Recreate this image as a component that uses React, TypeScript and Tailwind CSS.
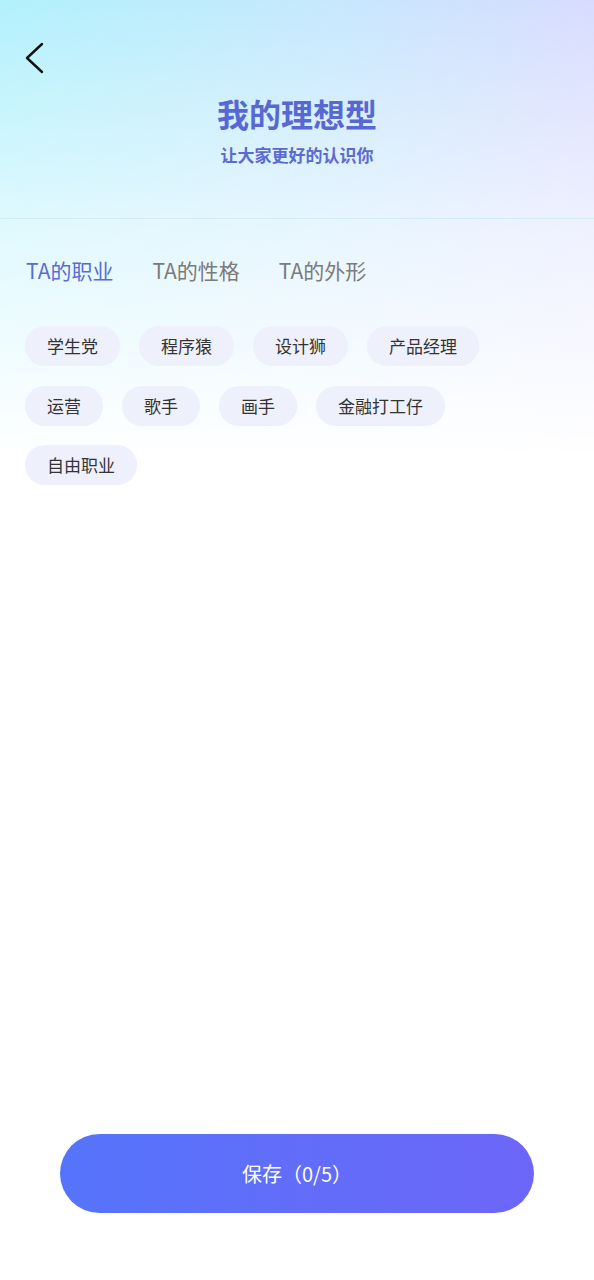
import React from 'react';

const tabs = ['TA的职业', 'TA的性格', 'TA的外形'];
const jobs = ['学生党', '程序猿', '设计狮', '产品经理', '运营', '歌手', '画手', '金融打工仔', '自由职业'];

const App: React.FC = () => {
  return (
    <div
      className="min-h-[1280px] w-full flex flex-col bg-white bg-[linear-gradient(to_bottom,rgba(255,255,255,0)_0px,rgba(255,255,255,0.6)_230px,#ffffff_460px),linear-gradient(to_right,#b2f1fc,#c6e8fd_55%,#d8dcfe)] bg-no-repeat"
      style={{ fontFamily: '"Noto Sans CJK SC", "Noto Sans", sans-serif' }}
    >
      {/* Header */}
      <header className="h-[219px] border-b border-[#d3ecf4] flex flex-col">
        <div className="mt-[42px] pl-[24px] h-[32px]">
          <svg width="20" height="32" viewBox="0 0 20 32" fill="none">
            <path d="M18 2 L3 16 L18 30" stroke="#111" strokeWidth="2.4" strokeLinecap="round" strokeLinejoin="round" />
          </svg>
        </div>
        <h1 className="mt-[20px] text-center text-[32px] leading-[38px] font-bold text-[#5868d2]">我的理想型</h1>
        <p className="mt-[11px] text-center text-[17px] leading-[24px] font-semibold text-[#5a6ad0]">让大家更好的认识你</p>
      </header>

      {/* Tabs */}
      <nav className="mt-[37px] pl-[26px] flex gap-[39px]">
        {tabs.map((t, i) => (
          <span
            key={t}
            className={
              i === 0
                ? 'text-[21px] leading-[28px] text-[#5a6dcf]'
                : 'text-[21px] leading-[28px] text-[#7b7b7b]'
            }
          >
            {t}
          </span>
        ))}
      </nav>

      {/* Chips */}
      <div className="mt-[42px] pl-[25px] pr-[25px] flex flex-wrap gap-x-[19px] gap-y-[19.5px]">
        {jobs.map((j) => (
          <span
            key={j}
            className="h-[40px] px-[22px] rounded-full bg-[#eef0fb] text-[17px] leading-[40px] text-[#333333]"
          >
            {j}
          </span>
        ))}
      </div>

      <div className="flex-1" />

      {/* Save button */}
      <div className="px-[60px] mb-[67px]">
        <button className="w-full h-[79px] rounded-full bg-gradient-to-r from-[#5574fb] to-[#6c66f8] text-white text-[20px]">
          保存（0/5）
        </button>
      </div>
    </div>
  );
};

export default App;
